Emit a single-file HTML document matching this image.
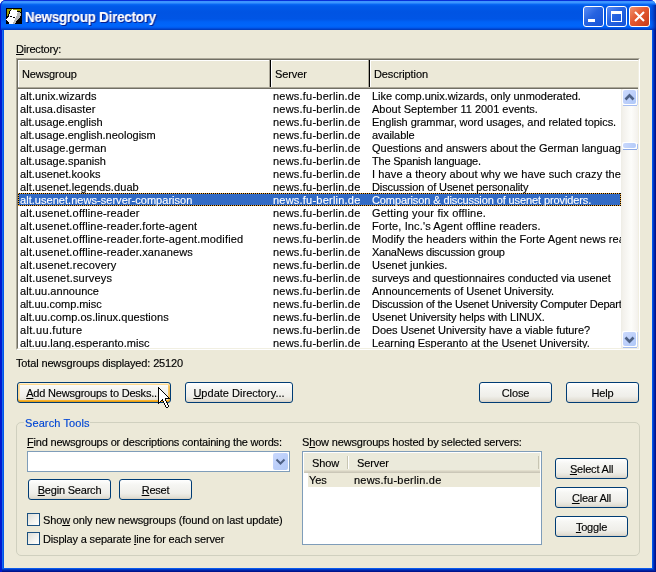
<!DOCTYPE html>
<html><head><meta charset="utf-8">
<style>
*{margin:0;padding:0;box-sizing:border-box}
html,body{width:656px;height:572px;overflow:hidden;background:#FFFFFF}
body{position:relative;font-family:"Liberation Sans",sans-serif;font-size:11px;color:#000}
.a{position:absolute}
.t{position:absolute;white-space:pre;line-height:13px;font-size:11px;letter-spacing:-0.2px;will-change:transform;-webkit-text-stroke:0.15px currentColor}
.ul{text-decoration:underline;text-underline-offset:1px;text-decoration-thickness:1px}
.btn{position:absolute;height:21px;border:1px solid #003C74;border-radius:3px;
 background:linear-gradient(#FFFFFF 0%,#F6F6F3 25%,#EFEEE9 70%,#E3E0D6 90%,#D6D0C5 100%);}
.btn .t{left:0;right:0;text-align:center;top:4px}
.hot{box-shadow:inset 0 1px 0 #FFF0CF,inset 0 -1px 0 #E5A01A,inset 0 2px 0 #FCD98F,inset 0 -2px 0 #F8B330,inset 1px 0 0 #FAD592,inset -1px 0 0 #F3BD55,inset 2px 0 0 #FBE0A8,inset -2px 0 0 #F8C96A}
.cell{position:absolute;top:0;white-space:pre;line-height:13px;overflow:hidden;letter-spacing:-0.1px;will-change:transform;-webkit-text-stroke:0.15px currentColor}
</style></head><body>

<div class="a" style="left:0;top:0;width:656px;height:572px;background:#0041C9;border-radius:6px 6px 0 0"></div>
<div class="a" style="left:0;top:0;width:656px;height:30px;border-radius:6px 6px 0 0;box-shadow:inset 1px 0 0 #0019CF;background:linear-gradient(#0831D9 0px,#0831D9 1px,#3D95FF 1px,#3D95FF 3px,#0A6BF5 4px,#005AEA 6px,#0054E3 12px,#0055E5 19px,#0062F7 22px,#0066FB 26px,#0057EC 28px,#0041C9 29px,#003BB8 30px)"></div>
<div class="a" style="left:0;top:30px;width:4px;height:542px;background:linear-gradient(90deg,#0019CF 0,#0019CF 2px,#166AEE 2px,#166AEE 3px,#0055EA 3px)"></div>
<div class="a" style="left:652px;top:30px;width:4px;height:542px;background:linear-gradient(90deg,#0055EA 0,#0055EA 1px,#0038C4 1px,#0038C4 2px,#0022A6 2px,#0022A6 3px,#00138C 3px)"></div>
<div class="a" style="left:2px;top:568px;width:654px;height:4px;clip-path:polygon(0 0,650px 0,654px 4px,0 4px);background:linear-gradient(#0B5BEC 0,#0B5BEC 1px,#0038C4 1px,#0038C4 2px,#0022A6 2px,#0022A6 3px,#00138C 3px)"></div>
<div class="a" style="left:651px;top:5px;width:5px;height:25px;background:linear-gradient(90deg,rgba(0,40,180,0) 0,rgba(0,40,170,0.35) 2px,rgba(0,20,130,0.75) 5px)"></div>
<div class="a" style="left:4px;top:30px;width:648px;height:538px;background:#ECE9D8"></div>
<svg class="a" style="left:6px;top:8px" width="16" height="16" shape-rendering="crispEdges"><rect x="0" y="0" width="1" height="1" fill="#000000"/><rect x="1" y="0" width="1" height="1" fill="#000000"/><rect x="2" y="0" width="1" height="1" fill="#000000"/><rect x="3" y="0" width="1" height="1" fill="#000000"/><rect x="4" y="0" width="1" height="1" fill="#000000"/><rect x="5" y="0" width="1" height="1" fill="#000000"/><rect x="6" y="0" width="1" height="1" fill="#000000"/><rect x="7" y="0" width="1" height="1" fill="#000000"/><rect x="8" y="0" width="1" height="1" fill="#000000"/><rect x="9" y="0" width="1" height="1" fill="#000000"/><rect x="10" y="0" width="1" height="1" fill="#000000"/><rect x="11" y="0" width="1" height="1" fill="#000000"/><rect x="12" y="0" width="1" height="1" fill="#000000"/><rect x="13" y="0" width="1" height="1" fill="#000000"/><rect x="14" y="0" width="1" height="1" fill="#000000"/><rect x="15" y="0" width="1" height="1" fill="#000000"/><rect x="0" y="1" width="1" height="1" fill="#000000"/><rect x="1" y="1" width="1" height="1" fill="#9E9E00"/><rect x="2" y="1" width="1" height="1" fill="#9E9E00"/><rect x="3" y="1" width="1" height="1" fill="#9E9E00"/><rect x="4" y="1" width="1" height="1" fill="#9E9E00"/><rect x="5" y="1" width="1" height="1" fill="#9E9E00"/><rect x="6" y="1" width="1" height="1" fill="#FFFFFF"/><rect x="7" y="1" width="1" height="1" fill="#9E9E00"/><rect x="8" y="1" width="1" height="1" fill="#9E9E00"/><rect x="9" y="1" width="1" height="1" fill="#9E9E00"/><rect x="10" y="1" width="1" height="1" fill="#9E9E00"/><rect x="11" y="1" width="1" height="1" fill="#9E9E00"/><rect x="12" y="1" width="1" height="1" fill="#9E9E00"/><rect x="13" y="1" width="1" height="1" fill="#9E9E00"/><rect x="14" y="1" width="1" height="1" fill="#9E9E00"/><rect x="15" y="1" width="1" height="1" fill="#000000"/><rect x="0" y="2" width="1" height="1" fill="#000000"/><rect x="1" y="2" width="1" height="1" fill="#9E9E00"/><rect x="2" y="2" width="1" height="1" fill="#9E9E00"/><rect x="3" y="2" width="1" height="1" fill="#9E9E00"/><rect x="4" y="2" width="1" height="1" fill="#000000"/><rect x="5" y="2" width="1" height="1" fill="#FFFFFF"/><rect x="6" y="2" width="1" height="1" fill="#FFFFFF"/><rect x="7" y="2" width="1" height="1" fill="#FFFFFF"/><rect x="8" y="2" width="1" height="1" fill="#FFFFFF"/><rect x="9" y="2" width="1" height="1" fill="#FFFFFF"/><rect x="10" y="2" width="1" height="1" fill="#FFFFFF"/><rect x="11" y="2" width="1" height="1" fill="#9E9E00"/><rect x="12" y="2" width="1" height="1" fill="#9E9E00"/><rect x="13" y="2" width="1" height="1" fill="#9E9E00"/><rect x="14" y="2" width="1" height="1" fill="#9E9E00"/><rect x="15" y="2" width="1" height="1" fill="#000000"/><rect x="0" y="3" width="1" height="1" fill="#000000"/><rect x="1" y="3" width="1" height="1" fill="#9E9E00"/><rect x="2" y="3" width="1" height="1" fill="#9E9E00"/><rect x="3" y="3" width="1" height="1" fill="#000000"/><rect x="4" y="3" width="1" height="1" fill="#FFFFFF"/><rect x="5" y="3" width="1" height="1" fill="#FFFFFF"/><rect x="6" y="3" width="1" height="1" fill="#FFFFFF"/><rect x="7" y="3" width="1" height="1" fill="#FFFFFF"/><rect x="8" y="3" width="1" height="1" fill="#FFFFFF"/><rect x="9" y="3" width="1" height="1" fill="#FFFFFF"/><rect x="10" y="3" width="1" height="1" fill="#FFFFFF"/><rect x="11" y="3" width="1" height="1" fill="#000000"/><rect x="12" y="3" width="1" height="1" fill="#000000"/><rect x="13" y="3" width="1" height="1" fill="#000000"/><rect x="14" y="3" width="1" height="1" fill="#9E9E00"/><rect x="15" y="3" width="1" height="1" fill="#000000"/><rect x="0" y="4" width="1" height="1" fill="#000000"/><rect x="1" y="4" width="1" height="1" fill="#9E9E00"/><rect x="2" y="4" width="1" height="1" fill="#9E9E00"/><rect x="3" y="4" width="1" height="1" fill="#000000"/><rect x="4" y="4" width="1" height="1" fill="#FFFFFF"/><rect x="5" y="4" width="1" height="1" fill="#FFFFFF"/><rect x="6" y="4" width="1" height="1" fill="#FFFFFF"/><rect x="7" y="4" width="1" height="1" fill="#FFFFFF"/><rect x="8" y="4" width="1" height="1" fill="#FFFFFF"/><rect x="9" y="4" width="1" height="1" fill="#FFFFFF"/><rect x="10" y="4" width="1" height="1" fill="#FFFFFF"/><rect x="11" y="4" width="1" height="1" fill="#FFFFFF"/><rect x="12" y="4" width="1" height="1" fill="#B8B8B8"/><rect x="13" y="4" width="1" height="1" fill="#B8B8B8"/><rect x="14" y="4" width="1" height="1" fill="#000000"/><rect x="15" y="4" width="1" height="1" fill="#000000"/><rect x="0" y="5" width="1" height="1" fill="#000000"/><rect x="1" y="5" width="1" height="1" fill="#9E9E00"/><rect x="2" y="5" width="1" height="1" fill="#9E9E00"/><rect x="3" y="5" width="1" height="1" fill="#000000"/><rect x="4" y="5" width="1" height="1" fill="#FFFFFF"/><rect x="5" y="5" width="1" height="1" fill="#FFFFFF"/><rect x="6" y="5" width="1" height="1" fill="#FFFFFF"/><rect x="7" y="5" width="1" height="1" fill="#FFFFFF"/><rect x="8" y="5" width="1" height="1" fill="#FFFFFF"/><rect x="9" y="5" width="1" height="1" fill="#FFFFFF"/><rect x="10" y="5" width="1" height="1" fill="#FFFFFF"/><rect x="11" y="5" width="1" height="1" fill="#B8B8B8"/><rect x="12" y="5" width="1" height="1" fill="#B8B8B8"/><rect x="13" y="5" width="1" height="1" fill="#B8B8B8"/><rect x="14" y="5" width="1" height="1" fill="#B8B8B8"/><rect x="15" y="5" width="1" height="1" fill="#000000"/><rect x="0" y="6" width="1" height="1" fill="#000000"/><rect x="1" y="6" width="1" height="1" fill="#9E9E00"/><rect x="2" y="6" width="1" height="1" fill="#000000"/><rect x="3" y="6" width="1" height="1" fill="#FFFFFF"/><rect x="4" y="6" width="1" height="1" fill="#FFFFFF"/><rect x="5" y="6" width="1" height="1" fill="#FFFFFF"/><rect x="6" y="6" width="1" height="1" fill="#FFFFFF"/><rect x="7" y="6" width="1" height="1" fill="#FFFFFF"/><rect x="8" y="6" width="1" height="1" fill="#FFFFFF"/><rect x="9" y="6" width="1" height="1" fill="#FFFFFF"/><rect x="10" y="6" width="1" height="1" fill="#FFFFFF"/><rect x="11" y="6" width="1" height="1" fill="#B8B8B8"/><rect x="12" y="6" width="1" height="1" fill="#B8B8B8"/><rect x="13" y="6" width="1" height="1" fill="#B8B8B8"/><rect x="14" y="6" width="1" height="1" fill="#B8B8B8"/><rect x="15" y="6" width="1" height="1" fill="#000000"/><rect x="0" y="7" width="1" height="1" fill="#000000"/><rect x="1" y="7" width="1" height="1" fill="#9E9E00"/><rect x="2" y="7" width="1" height="1" fill="#000000"/><rect x="3" y="7" width="1" height="1" fill="#FFFFFF"/><rect x="4" y="7" width="1" height="1" fill="#FFFFFF"/><rect x="5" y="7" width="1" height="1" fill="#FFFFFF"/><rect x="6" y="7" width="1" height="1" fill="#FFFFFF"/><rect x="7" y="7" width="1" height="1" fill="#FFFFFF"/><rect x="8" y="7" width="1" height="1" fill="#FFFFFF"/><rect x="9" y="7" width="1" height="1" fill="#FFFFFF"/><rect x="10" y="7" width="1" height="1" fill="#FFFFFF"/><rect x="11" y="7" width="1" height="1" fill="#B8B8B8"/><rect x="12" y="7" width="1" height="1" fill="#B8B8B8"/><rect x="13" y="7" width="1" height="1" fill="#B8B8B8"/><rect x="14" y="7" width="1" height="1" fill="#B8B8B8"/><rect x="15" y="7" width="1" height="1" fill="#000000"/><rect x="0" y="8" width="1" height="1" fill="#000000"/><rect x="1" y="8" width="1" height="1" fill="#000000"/><rect x="2" y="8" width="1" height="1" fill="#000000"/><rect x="3" y="8" width="1" height="1" fill="#FFFFFF"/><rect x="4" y="8" width="1" height="1" fill="#000000"/><rect x="5" y="8" width="1" height="1" fill="#000000"/><rect x="6" y="8" width="1" height="1" fill="#FFFFFF"/><rect x="7" y="8" width="1" height="1" fill="#FFFFFF"/><rect x="8" y="8" width="1" height="1" fill="#FFFFFF"/><rect x="9" y="8" width="1" height="1" fill="#FFFFFF"/><rect x="10" y="8" width="1" height="1" fill="#B8B8B8"/><rect x="11" y="8" width="1" height="1" fill="#B8B8B8"/><rect x="12" y="8" width="1" height="1" fill="#B8B8B8"/><rect x="13" y="8" width="1" height="1" fill="#B8B8B8"/><rect x="14" y="8" width="1" height="1" fill="#000000"/><rect x="15" y="8" width="1" height="1" fill="#000000"/><rect x="0" y="9" width="1" height="1" fill="#000000"/><rect x="1" y="9" width="1" height="1" fill="#000000"/><rect x="2" y="9" width="1" height="1" fill="#FFFFFF"/><rect x="3" y="9" width="1" height="1" fill="#FFFFFF"/><rect x="4" y="9" width="1" height="1" fill="#FFFFFF"/><rect x="5" y="9" width="1" height="1" fill="#FFFFFF"/><rect x="6" y="9" width="1" height="1" fill="#FFFFFF"/><rect x="7" y="9" width="1" height="1" fill="#000000"/><rect x="8" y="9" width="1" height="1" fill="#000000"/><rect x="9" y="9" width="1" height="1" fill="#FFFFFF"/><rect x="10" y="9" width="1" height="1" fill="#B8B8B8"/><rect x="11" y="9" width="1" height="1" fill="#B8B8B8"/><rect x="12" y="9" width="1" height="1" fill="#B8B8B8"/><rect x="13" y="9" width="1" height="1" fill="#B8B8B8"/><rect x="14" y="9" width="1" height="1" fill="#000000"/><rect x="15" y="9" width="1" height="1" fill="#000000"/><rect x="0" y="10" width="1" height="1" fill="#000000"/><rect x="1" y="10" width="1" height="1" fill="#FFFFFF"/><rect x="2" y="10" width="1" height="1" fill="#FFFFFF"/><rect x="3" y="10" width="1" height="1" fill="#FFFFFF"/><rect x="4" y="10" width="1" height="1" fill="#FFFFFF"/><rect x="5" y="10" width="1" height="1" fill="#FFFFFF"/><rect x="6" y="10" width="1" height="1" fill="#FFFFFF"/><rect x="7" y="10" width="1" height="1" fill="#FFFFFF"/><rect x="8" y="10" width="1" height="1" fill="#FFFFFF"/><rect x="9" y="10" width="1" height="1" fill="#B8B8B8"/><rect x="10" y="10" width="1" height="1" fill="#B8B8B8"/><rect x="11" y="10" width="1" height="1" fill="#B8B8B8"/><rect x="12" y="10" width="1" height="1" fill="#B8B8B8"/><rect x="13" y="10" width="1" height="1" fill="#000000"/><rect x="14" y="10" width="1" height="1" fill="#000000"/><rect x="15" y="10" width="1" height="1" fill="#000000"/><rect x="0" y="11" width="1" height="1" fill="#FFFFFF"/><rect x="1" y="11" width="1" height="1" fill="#FFFFFF"/><rect x="2" y="11" width="1" height="1" fill="#FFFFFF"/><rect x="3" y="11" width="1" height="1" fill="#FFFFFF"/><rect x="4" y="11" width="1" height="1" fill="#FFFFFF"/><rect x="5" y="11" width="1" height="1" fill="#FFFFFF"/><rect x="6" y="11" width="1" height="1" fill="#FFFFFF"/><rect x="7" y="11" width="1" height="1" fill="#FFFFFF"/><rect x="8" y="11" width="1" height="1" fill="#FFFFFF"/><rect x="9" y="11" width="1" height="1" fill="#B8B8B8"/><rect x="10" y="11" width="1" height="1" fill="#B8B8B8"/><rect x="11" y="11" width="1" height="1" fill="#B8B8B8"/><rect x="12" y="11" width="1" height="1" fill="#000000"/><rect x="13" y="11" width="1" height="1" fill="#000000"/><rect x="14" y="11" width="1" height="1" fill="#000000"/><rect x="15" y="11" width="1" height="1" fill="#000000"/><rect x="0" y="12" width="1" height="1" fill="#000000"/><rect x="1" y="12" width="1" height="1" fill="#FFFFFF"/><rect x="2" y="12" width="1" height="1" fill="#FFFFFF"/><rect x="3" y="12" width="1" height="1" fill="#FFFFFF"/><rect x="4" y="12" width="1" height="1" fill="#FFFFFF"/><rect x="5" y="12" width="1" height="1" fill="#FFFFFF"/><rect x="6" y="12" width="1" height="1" fill="#FFFFFF"/><rect x="7" y="12" width="1" height="1" fill="#FFFFFF"/><rect x="8" y="12" width="1" height="1" fill="#B8B8B8"/><rect x="9" y="12" width="1" height="1" fill="#B8B8B8"/><rect x="10" y="12" width="1" height="1" fill="#B8B8B8"/><rect x="11" y="12" width="1" height="1" fill="#000000"/><rect x="12" y="12" width="1" height="1" fill="#000000"/><rect x="13" y="12" width="1" height="1" fill="#000000"/><rect x="14" y="12" width="1" height="1" fill="#000000"/><rect x="15" y="12" width="1" height="1" fill="#000000"/><rect x="0" y="13" width="1" height="1" fill="#000000"/><rect x="1" y="13" width="1" height="1" fill="#000000"/><rect x="2" y="13" width="1" height="1" fill="#FFFFFF"/><rect x="3" y="13" width="1" height="1" fill="#FFFFFF"/><rect x="4" y="13" width="1" height="1" fill="#FFFFFF"/><rect x="5" y="13" width="1" height="1" fill="#FFFFFF"/><rect x="6" y="13" width="1" height="1" fill="#FFFFFF"/><rect x="7" y="13" width="1" height="1" fill="#FFFFFF"/><rect x="8" y="13" width="1" height="1" fill="#B8B8B8"/><rect x="9" y="13" width="1" height="1" fill="#B8B8B8"/><rect x="10" y="13" width="1" height="1" fill="#000000"/><rect x="11" y="13" width="1" height="1" fill="#000000"/><rect x="12" y="13" width="1" height="1" fill="#000000"/><rect x="13" y="13" width="1" height="1" fill="#000000"/><rect x="14" y="13" width="1" height="1" fill="#000000"/><rect x="15" y="13" width="1" height="1" fill="#000000"/><rect x="0" y="14" width="1" height="1" fill="#000000"/><rect x="1" y="14" width="1" height="1" fill="#000000"/><rect x="2" y="14" width="1" height="1" fill="#000000"/><rect x="3" y="14" width="1" height="1" fill="#FFFFFF"/><rect x="4" y="14" width="1" height="1" fill="#FFFFFF"/><rect x="5" y="14" width="1" height="1" fill="#FFFFFF"/><rect x="6" y="14" width="1" height="1" fill="#FFFFFF"/><rect x="7" y="14" width="1" height="1" fill="#B8B8B8"/><rect x="8" y="14" width="1" height="1" fill="#B8B8B8"/><rect x="9" y="14" width="1" height="1" fill="#B8B8B8"/><rect x="10" y="14" width="1" height="1" fill="#000000"/><rect x="11" y="14" width="1" height="1" fill="#000000"/><rect x="12" y="14" width="1" height="1" fill="#000000"/><rect x="13" y="14" width="1" height="1" fill="#000000"/><rect x="14" y="14" width="1" height="1" fill="#000000"/><rect x="15" y="14" width="1" height="1" fill="#000000"/><rect x="0" y="15" width="1" height="1" fill="#000000"/><rect x="1" y="15" width="1" height="1" fill="#000000"/><rect x="2" y="15" width="1" height="1" fill="#000000"/><rect x="3" y="15" width="1" height="1" fill="#FFFFFF"/><rect x="4" y="15" width="1" height="1" fill="#FFFFFF"/><rect x="5" y="15" width="1" height="1" fill="#FFFFFF"/><rect x="6" y="15" width="1" height="1" fill="#FFFFFF"/><rect x="7" y="15" width="1" height="1" fill="#B8B8B8"/><rect x="8" y="15" width="1" height="1" fill="#B8B8B8"/><rect x="9" y="15" width="1" height="1" fill="#000000"/><rect x="10" y="15" width="1" height="1" fill="#000000"/><rect x="11" y="15" width="1" height="1" fill="#000000"/><rect x="12" y="15" width="1" height="1" fill="#000000"/><rect x="13" y="15" width="1" height="1" fill="#000000"/><rect x="14" y="15" width="1" height="1" fill="#000000"/><rect x="15" y="15" width="1" height="1" fill="#000000"/></svg>
<div class="t" style="left:26px;top:10px;font-weight:bold;font-size:14px;line-height:16px;color:#0A1E8C;transform:scaleX(0.95);transform-origin:0 0">Newsgroup Directory</div>
<div class="t" style="left:25px;top:9px;font-weight:bold;font-size:14px;line-height:16px;color:#FFFFFF;transform:scaleX(0.95);transform-origin:0 0">Newsgroup Directory</div>
<div class="a" style="left:583px;top:6px;width:21px;height:21px;border:1px solid #FFFFFF;border-radius:3px;background:linear-gradient(135deg,#5A8CF6 0%,#2663E0 45%,#1552D8 100%)"><div class="a" style="left:4px;top:12px;width:7px;height:3px;background:#fff"></div></div>
<div class="a" style="left:606px;top:6px;width:21px;height:21px;border:1px solid #FFFFFF;border-radius:3px;background:linear-gradient(135deg,#5A8CF6 0%,#2663E0 45%,#1552D8 100%)"><div class="a" style="left:4px;top:4px;width:11px;height:11px;border:1px solid #fff;border-top-width:3px"></div></div>
<div class="a" style="left:629px;top:6px;width:21px;height:21px;border:1px solid #FFFFFF;border-radius:3px;background:linear-gradient(135deg,#F0926E 0%,#E3582F 45%,#C93A17 100%)"><svg class="a" style="left:0;top:0" width="19" height="19"><path d="M5 5 L14 14 M14 5 L5 14" stroke="#fff" stroke-width="2.1"/></svg></div>
<div class="t" style="left:16px;top:43px"><span class="ul">D</span>irectory:</div>
<div class="a" style="left:16px;top:58px;width:624px;height:292px;border-style:solid;border-width:1px;border-color:#ACA899 #FFFFFF #FFFFFF #ACA899"></div>
<div class="a" style="left:17px;top:59px;width:622px;height:290px;border-style:solid;border-width:1px;border-color:#716F64 #F1EFE2 #F1EFE2 #716F64;background:#fff"></div>
<div class="a" style="left:18px;top:60px;width:620px;height:29px;background:#ECE9D8;border-style:solid;border-width:1px 0 0 1px;border-color:#fff"></div>
<div class="a" style="left:18px;top:87px;width:620px;height:1px;background:#ACA899"></div>
<div class="a" style="left:18px;top:88px;width:620px;height:1px;background:#716F64"></div>
<div class="a" style="left:269px;top:60px;width:1px;height:27px;background:#ACA899"></div>
<div class="a" style="left:270px;top:60px;width:1px;height:27px;background:#000"></div>
<div class="a" style="left:271px;top:61px;width:1px;height:26px;background:#fff"></div>
<div class="a" style="left:368px;top:60px;width:1px;height:27px;background:#ACA899"></div>
<div class="a" style="left:369px;top:60px;width:1px;height:27px;background:#000"></div>
<div class="a" style="left:370px;top:61px;width:1px;height:26px;background:#fff"></div>
<div class="t" style="left:22px;top:68px;letter-spacing:-0.1px">Newsgroup</div>
<div class="t" style="left:275px;top:68px;letter-spacing:-0.1px">Server</div>
<div class="t" style="left:374px;top:68px;letter-spacing:-0.1px">Description</div>
<div class="a" style="left:18px;top:89px;width:603px;height:259px;overflow:hidden">
<div class="cell" style="left:2px;top:1px;width:248px;color:#000;letter-spacing:0.087px">alt.unix.wizards</div>
<div class="cell" style="left:255px;top:1px;width:95px;color:#000;letter-spacing:0.219px">news.fu-berlin.de</div>
<div class="cell" style="left:354px;top:1px;width:300px;color:#000;letter-spacing:-0.053px">Like comp.unix.wizards, only unmoderated.</div>
<div class="cell" style="left:2px;top:14px;width:248px;color:#000;letter-spacing:0.093px">alt.usa.disaster</div>
<div class="cell" style="left:255px;top:14px;width:95px;color:#000;letter-spacing:0.219px">news.fu-berlin.de</div>
<div class="cell" style="left:354px;top:14px;width:300px;color:#000;letter-spacing:-0.013px">About September 11 2001 events.</div>
<div class="cell" style="left:2px;top:27px;width:248px;color:#000;letter-spacing:0.000px">alt.usage.english</div>
<div class="cell" style="left:255px;top:27px;width:95px;color:#000;letter-spacing:0.219px">news.fu-berlin.de</div>
<div class="cell" style="left:354px;top:27px;width:300px;color:#000;letter-spacing:-0.060px">English grammar, word usages, and related topics.</div>
<div class="cell" style="left:2px;top:40px;width:248px;color:#000;letter-spacing:0.000px">alt.usage.english.neologism</div>
<div class="cell" style="left:255px;top:40px;width:95px;color:#000;letter-spacing:0.219px">news.fu-berlin.de</div>
<div class="cell" style="left:354px;top:40px;width:300px;color:#000;letter-spacing:-0.100px">available</div>
<div class="cell" style="left:2px;top:53px;width:248px;color:#000;letter-spacing:0.087px">alt.usage.german</div>
<div class="cell" style="left:255px;top:53px;width:95px;color:#000;letter-spacing:0.219px">news.fu-berlin.de</div>
<div class="cell" style="left:354px;top:53px;width:300px;color:#000;letter-spacing:0.000px">Questions and answers about the German language.</div>
<div class="cell" style="left:2px;top:66px;width:248px;color:#000;letter-spacing:0.019px">alt.usage.spanish</div>
<div class="cell" style="left:255px;top:66px;width:95px;color:#000;letter-spacing:0.219px">news.fu-berlin.de</div>
<div class="cell" style="left:354px;top:66px;width:300px;color:#000;letter-spacing:-0.205px">The Spanish language.</div>
<div class="cell" style="left:2px;top:79px;width:248px;color:#000;letter-spacing:0.067px">alt.usenet.kooks</div>
<div class="cell" style="left:255px;top:79px;width:95px;color:#000;letter-spacing:0.219px">news.fu-berlin.de</div>
<div class="cell" style="left:354px;top:79px;width:300px;color:#000;letter-spacing:0.106px">I have a theory about why we have such crazy theories.</div>
<div class="cell" style="left:2px;top:92px;width:248px;color:#000;letter-spacing:0.086px">alt.usenet.legends.duab</div>
<div class="cell" style="left:255px;top:92px;width:95px;color:#000;letter-spacing:0.219px">news.fu-berlin.de</div>
<div class="cell" style="left:354px;top:92px;width:300px;color:#000;letter-spacing:-0.097px">Discussion of Usenet personality</div>
<div class="a" style="left:0;top:104px;width:603px;height:13px;background:#316AC5"></div>
<div class="a" style="left:0;top:104px;width:603px;height:1px;background:repeating-linear-gradient(90deg,#F2A93B 0,#F2A93B 1px,#000 1px,#000 2px)"></div>
<div class="a" style="left:0;top:116px;width:603px;height:1px;background:repeating-linear-gradient(90deg,#000 0,#000 1px,#F2A93B 1px,#F2A93B 2px)"></div>
<div class="a" style="left:0;top:104px;width:1px;height:13px;background:repeating-linear-gradient(#F2A93B 0,#F2A93B 1px,#000 1px,#000 2px)"></div>
<div class="a" style="left:602px;top:104px;width:1px;height:13px;background:repeating-linear-gradient(#000 0,#000 1px,#F2A93B 1px,#F2A93B 2px)"></div>
<div class="cell" style="left:2px;top:105px;width:248px;color:#fff;letter-spacing:0.038px">alt.usenet.news-server-comparison</div>
<div class="cell" style="left:255px;top:105px;width:95px;color:#fff;letter-spacing:0.219px">news.fu-berlin.de</div>
<div class="cell" style="left:354px;top:105px;width:300px;color:#fff;letter-spacing:-0.105px">Comparison &amp; discussion of usenet providers.</div>
<div class="cell" style="left:2px;top:118px;width:248px;color:#000;letter-spacing:0.167px">alt.usenet.offline-reader</div>
<div class="cell" style="left:255px;top:118px;width:95px;color:#000;letter-spacing:0.219px">news.fu-berlin.de</div>
<div class="cell" style="left:354px;top:118px;width:300px;color:#000;letter-spacing:0.188px">Getting your fix offline.</div>
<div class="cell" style="left:2px;top:131px;width:248px;color:#000;letter-spacing:0.167px">alt.usenet.offline-reader.forte-agent</div>
<div class="cell" style="left:255px;top:131px;width:95px;color:#000;letter-spacing:0.219px">news.fu-berlin.de</div>
<div class="cell" style="left:354px;top:131px;width:300px;color:#000;letter-spacing:0.129px">Forte, Inc.'s Agent offline readers.</div>
<div class="cell" style="left:2px;top:144px;width:248px;color:#000;letter-spacing:0.167px">alt.usenet.offline-reader.forte-agent.modified</div>
<div class="cell" style="left:255px;top:144px;width:95px;color:#000;letter-spacing:0.219px">news.fu-berlin.de</div>
<div class="cell" style="left:354px;top:144px;width:300px;color:#000;letter-spacing:0.042px">Modify the headers within the Forte Agent news reader.</div>
<div class="cell" style="left:2px;top:157px;width:248px;color:#000;letter-spacing:0.167px">alt.usenet.offline-reader.xananews</div>
<div class="cell" style="left:255px;top:157px;width:95px;color:#000;letter-spacing:0.219px">news.fu-berlin.de</div>
<div class="cell" style="left:354px;top:157px;width:300px;color:#000;letter-spacing:-0.246px">XanaNews discussion group</div>
<div class="cell" style="left:2px;top:170px;width:248px;color:#000;letter-spacing:0.189px">alt.usenet.recovery</div>
<div class="cell" style="left:255px;top:170px;width:95px;color:#000;letter-spacing:0.219px">news.fu-berlin.de</div>
<div class="cell" style="left:354px;top:170px;width:300px;color:#000;letter-spacing:0.014px">Usenet junkies.</div>
<div class="cell" style="left:2px;top:183px;width:248px;color:#000;letter-spacing:0.194px">alt.usenet.surveys</div>
<div class="cell" style="left:255px;top:183px;width:95px;color:#000;letter-spacing:0.219px">news.fu-berlin.de</div>
<div class="cell" style="left:354px;top:183px;width:300px;color:#000;letter-spacing:-0.048px">surveys and questionnaires conducted via usenet</div>
<div class="cell" style="left:2px;top:196px;width:248px;color:#000;letter-spacing:0.050px">alt.uu.announce</div>
<div class="cell" style="left:255px;top:196px;width:95px;color:#000;letter-spacing:0.219px">news.fu-berlin.de</div>
<div class="cell" style="left:354px;top:196px;width:300px;color:#000;letter-spacing:-0.032px">Announcements of Usenet University.</div>
<div class="cell" style="left:2px;top:209px;width:248px;color:#000;letter-spacing:-0.060px">alt.uu.comp.misc</div>
<div class="cell" style="left:255px;top:209px;width:95px;color:#000;letter-spacing:0.219px">news.fu-berlin.de</div>
<div class="cell" style="left:354px;top:209px;width:300px;color:#000;letter-spacing:-0.215px">Discussion of the Usenet University Computer Department.</div>
<div class="cell" style="left:2px;top:222px;width:248px;color:#000;letter-spacing:0.045px">alt.uu.comp.os.linux.questions</div>
<div class="cell" style="left:255px;top:222px;width:95px;color:#000;letter-spacing:0.219px">news.fu-berlin.de</div>
<div class="cell" style="left:354px;top:222px;width:300px;color:#000;letter-spacing:-0.112px">Usenet University helps with LINUX.</div>
<div class="cell" style="left:2px;top:235px;width:248px;color:#000;letter-spacing:0.333px">alt.uu.future</div>
<div class="cell" style="left:255px;top:235px;width:95px;color:#000;letter-spacing:0.219px">news.fu-berlin.de</div>
<div class="cell" style="left:354px;top:235px;width:300px;color:#000;letter-spacing:-0.047px">Does Usenet University have a viable future?</div>
<div class="cell" style="left:2px;top:248px;width:248px;color:#000;letter-spacing:0.048px">alt.uu.lang.esperanto.misc</div>
<div class="cell" style="left:255px;top:248px;width:95px;color:#000;letter-spacing:0.219px">news.fu-berlin.de</div>
<div class="cell" style="left:354px;top:248px;width:300px;color:#000;letter-spacing:-0.009px">Learning Esperanto at the Usenet University.</div>
</div>
<div class="a" style="left:621px;top:89px;width:17px;height:259px;background:linear-gradient(90deg,#EEEDE5 0,#F3F1EC 2px,#FDFDFA 60%,#F3F1EC 100%)"></div>
<div class="a" style="left:622px;top:89px;width:15px;height:16px;border-radius:2px;background:#fff"></div><div class="a" style="left:623px;top:105px;width:14px;height:1px;background:#A6BDF0"></div><div class="a" style="left:637px;top:90px;width:1px;height:15px;background:#C9D7F5"></div><div class="a" style="left:623px;top:90px;width:13px;height:14px;border-radius:2px;background:linear-gradient(135deg,#CCDAFC 0%,#BCCFFA 55%,#AFC8F8 100%)"></div><svg class="a" style="left:621px;top:89px" width="17" height="17"><path d="M4.5 10.5 L8.5 6.3 L12.5 10.5" fill="none" stroke="#4D6185" stroke-width="2.6"/></svg>
<div class="a" style="left:622px;top:331px;width:15px;height:16px;border-radius:2px;background:#fff"></div><div class="a" style="left:623px;top:347px;width:14px;height:1px;background:#A6BDF0"></div><div class="a" style="left:637px;top:332px;width:1px;height:15px;background:#C9D7F5"></div><div class="a" style="left:623px;top:332px;width:13px;height:14px;border-radius:2px;background:linear-gradient(135deg,#CCDAFC 0%,#BCCFFA 55%,#AFC8F8 100%)"></div><svg class="a" style="left:621px;top:331px" width="17" height="17"><path d="M4.5 6.5 L8.5 10.7 L12.5 6.5" fill="none" stroke="#4D6185" stroke-width="2.6"/></svg>
<div class="a" style="left:622px;top:142px;width:15px;height:7px;border-radius:2px;background:#fff"></div>
<div class="a" style="left:623px;top:143px;width:13px;height:5px;border-radius:2px;background:linear-gradient(90deg,#C9D8FC,#B4CBF9)"></div>
<div class="a" style="left:623px;top:149px;width:14px;height:1px;background:#8DA9E4"></div>
<div class="a" style="left:637px;top:144px;width:1px;height:5px;background:#A6BDF0"></div>
<div class="t" style="left:16px;top:357px;letter-spacing:-0.147px">Total newsgroups displayed: 25120</div>
<div class="btn hot" style="left:17px;top:382px;width:154px"><div class="t" style="left:-2px"><span class="ul">A</span>dd Newsgroups to Desks...</div></div>
<div class="btn" style="left:185px;top:382px;width:108px"><div class="t" style="left:0px"><span style="letter-spacing:0.017px"><span class="ul">U</span>pdate Directory...</span></div></div>
<div class="btn" style="left:479px;top:382px;width:73px"><div class="t" style="left:0px"><span style="letter-spacing:-0.1px">Close</span></div></div>
<div class="btn" style="left:566px;top:382px;width:73px"><div class="t" style="left:0px">Help</div></div>
<div class="a" style="left:16px;top:422px;width:624px;height:134px;border:1px solid #D0D0BF;border-radius:5px"></div>
<div class="t" style="left:24px;top:417px;padding:0 0 0 1px;background:#ECE9D8;color:#0046D5;letter-spacing:0.1px">Search Tools</div>
<div class="t" style="left:27px;top:436px;letter-spacing:-0.2px"><span class="ul">F</span>ind newsgroups or descriptions containing the words:</div>
<div class="a" style="left:27px;top:451px;width:263px;height:21px;border:1px solid #7F9DB9;background:#fff"></div>
<div class="a" style="left:273px;top:453px;width:15px;height:17px;border-radius:2px;background:linear-gradient(135deg,#CAD8FC 0%,#BCCFFA 50%,#B2CAF7 100%)"></div>
<svg class="a" style="left:273px;top:453px" width="15" height="17"><path d="M3.5 6.5 L7.5 10.5 L11.5 6.5" fill="none" stroke="#4D6185" stroke-width="2"/></svg>
<div class="btn" style="left:28px;top:479px;width:83px"><div class="t" style="left:0px"><span class="ul">B</span>egin Search</div></div>
<div class="btn" style="left:119px;top:479px;width:73px"><div class="t" style="left:0px"><span class="ul">R</span>eset</div></div>
<div class="a" style="left:27px;top:513px;width:13px;height:13px;border:1px solid #1C5180;background:linear-gradient(135deg,#DCDCD7 0%,#F4F4F0 60%,#FFFFFF 100%)"></div>
<div class="t" style="left:43px;top:514px"><span style="letter-spacing:-0.146px">Sho<span class="ul">w</span> only new newsgroups (found on last update)</span></div>
<div class="a" style="left:27px;top:532px;width:13px;height:13px;border:1px solid #1C5180;background:linear-gradient(135deg,#DCDCD7 0%,#F4F4F0 60%,#FFFFFF 100%)"></div>
<div class="t" style="left:43px;top:533px"><span style="letter-spacing:-0.168px">Display a separate <span class="ul">l</span>ine for each server</span></div>
<div class="t" style="left:302px;top:436px;letter-spacing:-0.167px">S<span class="ul">h</span>ow newsgroups hosted by selected servers:</div>
<div class="a" style="left:302px;top:451px;width:240px;height:94px;border:1px solid #7F9DB9;background:#fff"></div>
<div class="a" style="left:304px;top:453px;width:236px;height:20px;background:linear-gradient(#EBEADB 0,#EBEADB 17px,#E2DECD 17px,#E2DECD 18px,#D6D2C2 18px,#D6D2C2 19px,#CBC7B8 19px)"></div>
<div class="a" style="left:347px;top:456px;width:1px;height:13px;background:#C7C5B2"></div>
<div class="a" style="left:348px;top:456px;width:1px;height:13px;background:#fff"></div>
<div class="a" style="left:538px;top:456px;width:1px;height:13px;background:#C7C5B2"></div>
<div class="t" style="left:312px;top:457px;letter-spacing:-0.1px">Show</div>
<div class="t" style="left:357px;top:457px;letter-spacing:-0.1px">Server</div>
<div class="a" style="left:308px;top:473px;width:232px;height:14px;background:#ECE9D8"></div>
<div class="t" style="left:309px;top:474px;letter-spacing:-0.1px">Yes</div>
<div class="t" style="left:354px;top:474px;letter-spacing:0.219px">news.fu-berlin.de</div>
<div class="btn" style="left:555px;top:458px;width:73px"><div class="t" style="left:0px"><span class="ul">S</span>elect All</div></div>
<div class="btn" style="left:555px;top:487px;width:73px"><div class="t" style="left:0px"><span class="ul">C</span>lear All</div></div>
<div class="btn" style="left:555px;top:516px;width:73px"><div class="t" style="left:0px"><span class="ul">T</span>oggle</div></div>
<svg class="a" style="left:158px;top:387px" width="12" height="21" shape-rendering="crispEdges"><rect x="0" y="0" width="1" height="1" fill="#000"/><rect x="0" y="1" width="1" height="1" fill="#000"/><rect x="1" y="1" width="1" height="1" fill="#000"/><rect x="0" y="2" width="1" height="1" fill="#000"/><rect x="1" y="2" width="1" height="1" fill="#fff"/><rect x="2" y="2" width="1" height="1" fill="#000"/><rect x="0" y="3" width="1" height="1" fill="#000"/><rect x="1" y="3" width="1" height="1" fill="#fff"/><rect x="2" y="3" width="1" height="1" fill="#fff"/><rect x="3" y="3" width="1" height="1" fill="#000"/><rect x="0" y="4" width="1" height="1" fill="#000"/><rect x="1" y="4" width="1" height="1" fill="#fff"/><rect x="2" y="4" width="1" height="1" fill="#fff"/><rect x="3" y="4" width="1" height="1" fill="#fff"/><rect x="4" y="4" width="1" height="1" fill="#000"/><rect x="0" y="5" width="1" height="1" fill="#000"/><rect x="1" y="5" width="1" height="1" fill="#fff"/><rect x="2" y="5" width="1" height="1" fill="#fff"/><rect x="3" y="5" width="1" height="1" fill="#fff"/><rect x="4" y="5" width="1" height="1" fill="#fff"/><rect x="5" y="5" width="1" height="1" fill="#000"/><rect x="0" y="6" width="1" height="1" fill="#000"/><rect x="1" y="6" width="1" height="1" fill="#fff"/><rect x="2" y="6" width="1" height="1" fill="#fff"/><rect x="3" y="6" width="1" height="1" fill="#fff"/><rect x="4" y="6" width="1" height="1" fill="#fff"/><rect x="5" y="6" width="1" height="1" fill="#fff"/><rect x="6" y="6" width="1" height="1" fill="#000"/><rect x="0" y="7" width="1" height="1" fill="#000"/><rect x="1" y="7" width="1" height="1" fill="#fff"/><rect x="2" y="7" width="1" height="1" fill="#fff"/><rect x="3" y="7" width="1" height="1" fill="#fff"/><rect x="4" y="7" width="1" height="1" fill="#fff"/><rect x="5" y="7" width="1" height="1" fill="#fff"/><rect x="6" y="7" width="1" height="1" fill="#fff"/><rect x="7" y="7" width="1" height="1" fill="#000"/><rect x="0" y="8" width="1" height="1" fill="#000"/><rect x="1" y="8" width="1" height="1" fill="#fff"/><rect x="2" y="8" width="1" height="1" fill="#fff"/><rect x="3" y="8" width="1" height="1" fill="#fff"/><rect x="4" y="8" width="1" height="1" fill="#fff"/><rect x="5" y="8" width="1" height="1" fill="#fff"/><rect x="6" y="8" width="1" height="1" fill="#fff"/><rect x="7" y="8" width="1" height="1" fill="#fff"/><rect x="8" y="8" width="1" height="1" fill="#000"/><rect x="0" y="9" width="1" height="1" fill="#000"/><rect x="1" y="9" width="1" height="1" fill="#fff"/><rect x="2" y="9" width="1" height="1" fill="#fff"/><rect x="3" y="9" width="1" height="1" fill="#fff"/><rect x="4" y="9" width="1" height="1" fill="#fff"/><rect x="5" y="9" width="1" height="1" fill="#fff"/><rect x="6" y="9" width="1" height="1" fill="#fff"/><rect x="7" y="9" width="1" height="1" fill="#fff"/><rect x="8" y="9" width="1" height="1" fill="#fff"/><rect x="9" y="9" width="1" height="1" fill="#000"/><rect x="0" y="10" width="1" height="1" fill="#000"/><rect x="1" y="10" width="1" height="1" fill="#fff"/><rect x="2" y="10" width="1" height="1" fill="#fff"/><rect x="3" y="10" width="1" height="1" fill="#fff"/><rect x="4" y="10" width="1" height="1" fill="#fff"/><rect x="5" y="10" width="1" height="1" fill="#fff"/><rect x="6" y="10" width="1" height="1" fill="#fff"/><rect x="7" y="10" width="1" height="1" fill="#fff"/><rect x="8" y="10" width="1" height="1" fill="#fff"/><rect x="9" y="10" width="1" height="1" fill="#fff"/><rect x="10" y="10" width="1" height="1" fill="#000"/><rect x="0" y="11" width="1" height="1" fill="#000"/><rect x="1" y="11" width="1" height="1" fill="#fff"/><rect x="2" y="11" width="1" height="1" fill="#fff"/><rect x="3" y="11" width="1" height="1" fill="#fff"/><rect x="4" y="11" width="1" height="1" fill="#fff"/><rect x="5" y="11" width="1" height="1" fill="#fff"/><rect x="6" y="11" width="1" height="1" fill="#fff"/><rect x="7" y="11" width="1" height="1" fill="#000"/><rect x="8" y="11" width="1" height="1" fill="#000"/><rect x="9" y="11" width="1" height="1" fill="#000"/><rect x="10" y="11" width="1" height="1" fill="#000"/><rect x="11" y="11" width="1" height="1" fill="#000"/><rect x="0" y="12" width="1" height="1" fill="#000"/><rect x="1" y="12" width="1" height="1" fill="#fff"/><rect x="2" y="12" width="1" height="1" fill="#fff"/><rect x="3" y="12" width="1" height="1" fill="#fff"/><rect x="4" y="12" width="1" height="1" fill="#000"/><rect x="5" y="12" width="1" height="1" fill="#fff"/><rect x="6" y="12" width="1" height="1" fill="#fff"/><rect x="7" y="12" width="1" height="1" fill="#000"/><rect x="0" y="13" width="1" height="1" fill="#000"/><rect x="1" y="13" width="1" height="1" fill="#fff"/><rect x="2" y="13" width="1" height="1" fill="#fff"/><rect x="3" y="13" width="1" height="1" fill="#000"/><rect x="4" y="13" width="1" height="1" fill="#000"/><rect x="5" y="13" width="1" height="1" fill="#fff"/><rect x="6" y="13" width="1" height="1" fill="#fff"/><rect x="7" y="13" width="1" height="1" fill="#000"/><rect x="0" y="14" width="1" height="1" fill="#000"/><rect x="1" y="14" width="1" height="1" fill="#fff"/><rect x="2" y="14" width="1" height="1" fill="#000"/><rect x="5" y="14" width="1" height="1" fill="#000"/><rect x="6" y="14" width="1" height="1" fill="#fff"/><rect x="7" y="14" width="1" height="1" fill="#fff"/><rect x="8" y="14" width="1" height="1" fill="#000"/><rect x="0" y="15" width="1" height="1" fill="#000"/><rect x="1" y="15" width="1" height="1" fill="#000"/><rect x="5" y="15" width="1" height="1" fill="#000"/><rect x="6" y="15" width="1" height="1" fill="#fff"/><rect x="7" y="15" width="1" height="1" fill="#fff"/><rect x="8" y="15" width="1" height="1" fill="#000"/><rect x="0" y="16" width="1" height="1" fill="#000"/><rect x="6" y="16" width="1" height="1" fill="#000"/><rect x="7" y="16" width="1" height="1" fill="#fff"/><rect x="8" y="16" width="1" height="1" fill="#fff"/><rect x="9" y="16" width="1" height="1" fill="#000"/><rect x="6" y="17" width="1" height="1" fill="#000"/><rect x="7" y="17" width="1" height="1" fill="#fff"/><rect x="8" y="17" width="1" height="1" fill="#fff"/><rect x="9" y="17" width="1" height="1" fill="#000"/><rect x="7" y="18" width="1" height="1" fill="#000"/><rect x="8" y="18" width="1" height="1" fill="#fff"/><rect x="9" y="18" width="1" height="1" fill="#fff"/><rect x="10" y="18" width="1" height="1" fill="#000"/><rect x="7" y="19" width="1" height="1" fill="#000"/><rect x="8" y="19" width="1" height="1" fill="#fff"/><rect x="9" y="19" width="1" height="1" fill="#fff"/><rect x="10" y="19" width="1" height="1" fill="#000"/><rect x="8" y="20" width="1" height="1" fill="#000"/><rect x="9" y="20" width="1" height="1" fill="#000"/></svg>
</body></html>
